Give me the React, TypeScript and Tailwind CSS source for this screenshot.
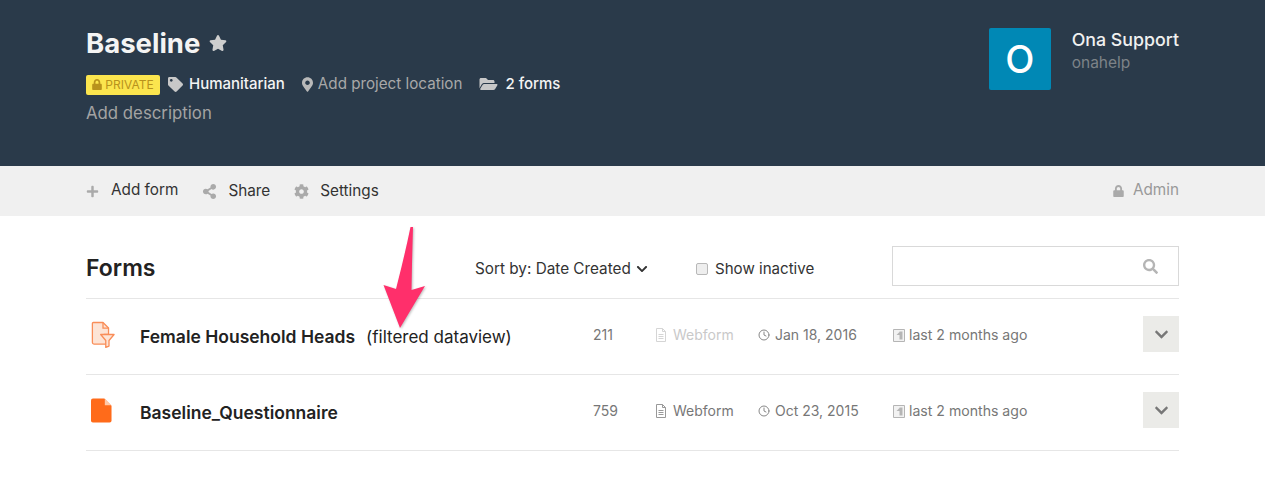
import { FaCog, FaLock, FaMapMarkerAlt, FaPlus, FaSearch, FaShareAlt, FaStar, FaTag, FaFolderOpen, FaChevronDown } from "react-icons/fa";
import { FiClock } from "react-icons/fi";

const FileLines = ({ className }: { className: string }) => (
  <svg viewBox="0 0 12 14" className={className} fill="none" stroke="currentColor" strokeWidth="1">
    <path d="M1.500 .5h6l3 3v10h-9z" />
    <path d="M7.500 .5v3h3M3.500 6.500h5M3.500 8.500h5M3.500 10.500h5" />
  </svg>
);

const SubmissionIcon = () => (
  <svg viewBox="0 0 12 13" className="w-[12px] h-[13px] text-[#b5b5b5] shrink-0">
    <path d="M.5.5h11v12H.5z" fill="#f2f2f2" stroke="currentColor" />
    <path d="M6.500 2.500h3v8h-3zM6.500 6l-3 0 3-3z" fill="currentColor" />
  </svg>
);

const FormIconFiltered = () => (
  <svg viewBox="0 0 26 28" className="w-[24px] h-[27px]">
    <path d="M2.500 1h10.500l6 6v7h-5l4.500 6v4.500H3.500a2 2 0 0 1-2-2V2a1 1 0 0 1 1-1z" fill="#fde4d6" stroke="#f98d58" strokeWidth="1.400" strokeLinejoin="round" />
    <path d="M13 1v6h6" fill="none" stroke="#f98d58" strokeWidth="1.400" />
    <path d="M10.500 14H25l-5.500 6.500v6l-3.500 1.500v-7.500z" fill="#fde4d6" stroke="#f98d58" strokeWidth="1.400" strokeLinejoin="round" />
  </svg>
);

const FormIconSolid = () => (
  <svg viewBox="0 0 22 25" className="w-[21px] h-[25px]">
    <path d="M2 0h12l7.500 7.500V23a2 2 0 0 1-2 2H2a2 2 0 0 1-2-2V2a2 2 0 0 1 2-2z" fill="#ff6b1a" />
    <path d="M14.500 .5v6.500h6.500z" fill="#ffc9a8" />
  </svg>
);

type Row = {
  name: string;
  extra?: string;
  count: number;
  date: string;
  filtered: boolean;
};

const rows: Row[] = [
  { name: "Female Household Heads", extra: "(filtered dataview)", count: 211, date: "Jan 18, 2016", filtered: true },
  { name: "Baseline_Questionnaire", count: 759, date: "Oct 23, 2015", filtered: false },
];

const FormRow = ({ row }: { row: Row }) => {
  return (
    <div className="flex items-start h-[76px] border-b border-[#e6e6e6]">
      <div className={`w-[54px] flex shrink-0 pl-[5px] ${row.filtered ? "pt-[22px]" : "pt-[23px]"}`}>
        {row.filtered ? <FormIconFiltered /> : <FormIconSolid />}
      </div>
      <div className="w-[453px] shrink-0 flex items-center text-[17.500px] leading-[24px] text-[#222] pt-[26px]">
        <span className="font-semibold">{row.name}</span>
        {row.extra && <span className="ml-[11px] text-[17px]">{row.extra}</span>}
      </div>
      <div className="w-[62px] shrink-0 text-[14px] leading-[20px] text-[#777] pt-[26px]">{row.count}</div>
      <div className={`w-[103px] shrink-0 flex items-center gap-[6px] text-[14px] leading-[20px] pt-[26px] ${row.filtered ? "text-[#c9c9c9]" : "text-[#777]"}`}>
        <FileLines className={`w-[12px] h-[14px] shrink-0 ${row.filtered ? "text-[#d5d5d5]" : "text-[#999]"}`} />
        Webform
      </div>
      <div className="w-[135px] shrink-0 flex items-center gap-[5px] text-[14px] leading-[20px] text-[#777] pt-[26px]">
        <FiClock className="w-[12px] h-[12px] shrink-0 text-[#888]" />
        {row.date}
      </div>
      <div className="flex items-center gap-[4px] text-[14.100px] leading-[20px] text-[#777] pt-[26px]">
        <SubmissionIcon />
        last 2 months ago
      </div>
      <button className="ml-auto mt-[17px] w-[36px] h-[36px] bg-[#ebebe8] flex items-center justify-center text-[#777]">
        <FaChevronDown className="w-[15px] h-[15px]" />
      </button>
    </div>
  );
};

export default function App() {
  return (
    <div className="relative h-[488px] overflow-hidden bg-white font-['Inter',sans-serif]">
      <header className="h-[166px] bg-[#2a3a4a] px-[86px] pt-[25px] flex justify-between">
        <div>
          <div className="flex items-center gap-[9px]">
            <h1 className="text-[27.500px] leading-[36px] font-bold text-[#f4f4f4]">Baseline</h1>
            <FaStar className="w-[18px] h-[18px] text-[#cfcfcf]" />
          </div>
          <div className="flex items-center mt-[12px] h-[22px] text-[15.200px]">
            <span className="flex items-center gap-[3px] mt-[1px] h-[20px] w-[74px] justify-center bg-[#fbe54e] rounded-[2px] text-[12px] text-[#b8921c]">
              <FaLock className="w-[10px] h-[11px]" />
              PRIVATE
            </span>
            <FaTag className="ml-[8px] w-[15px] h-[15px] text-[#c8c8c8]" />
            <span className="ml-[6px] font-medium text-[#f4f4f4] text-[15px]">Humanitarian</span>
            <FaMapMarkerAlt className="ml-[17px] w-[11px] h-[15px] text-[#b9b9b9]" />
            <span className="ml-[5px] text-[#a8a8a8]">Add project location</span>
            <FaFolderOpen className="ml-[17px] w-[19px] h-[16px] text-[#c8c8c8]" />
            <span className="ml-[7px] font-medium text-[#f4f4f4] text-[15px]">2 forms</span>
          </div>
          <p className="mt-[6px] text-[16.800px] leading-[24px] text-[#a3a3a3]">Add description</p>
        </div>
        <div className="w-[190px] flex gap-[21px] pt-[3px]">
          <div className="w-[62px] h-[62px] rounded-[2px] bg-[#0088b5] flex items-center justify-center">
            <span className="text-[38px] leading-none font-medium text-white">O</span>
          </div>
          <div className="whitespace-nowrap">
            <p className="text-[17.800px] leading-[24px] font-medium text-[#f0f0f0]">Ona Support</p>
            <p className="text-[15.500px] leading-[20px] mt-[1px] text-[#7d8388]">onahelp</p>
          </div>
        </div>
      </header>

      <nav className="h-[50px] bg-[#f0f0f0] px-[86px] flex items-center text-[15.300px] text-[#333]">
        <FaPlus className="w-[13px] h-[13px] text-[#aaa]" />
        <span className="ml-[12px] -mt-[1px]">Add form</span>
        <FaShareAlt className="ml-[24px] w-[15px] h-[15px] text-[#aaa]" />
        <span className="ml-[11px]">Share</span>
        <FaCog className="ml-[24px] w-[15px] h-[15px] text-[#aaa]" />
        <span className="ml-[11px]">Settings</span>
        <FaLock className="ml-auto w-[11px] h-[12px] text-[#aaa]" />
        <span className="ml-[9px] -mt-[1px] text-[#999]">Admin</span>
      </nav>

      <main className="px-[86px]">
        <div className="flex items-center h-[83px] border-b border-[#e6e6e6] pt-[30px] pb-[12px]">
          <h2 className="w-[389px] h-[40px] text-[23px] leading-[44px] font-semibold text-[#222]">Forms</h2>
          <div className="w-[221px] h-[40px] pt-[6px] flex items-center gap-[5px] text-[15.300px] text-[#333]">
            Sort by: Date Created
            <FaChevronDown className="w-[12px] h-[12px]" />
          </div>
          <label className="h-[40px] pt-[6px] flex items-center gap-[7px] text-[15.100px] text-[#333]">
            <span className="w-[12px] h-[12px] rounded-[2px] border border-[#b8b8b8] bg-[#eee]" />
            Show inactive
          </label>
          <div className="ml-auto w-[287px] h-[40px] border border-[#d9d9d9] flex items-center justify-end pr-[20px]">
            <FaSearch className="w-[15px] h-[15px] text-[#b5b5b5]" />
          </div>
        </div>
        {rows.map((row) => (
          <FormRow key={row.name} row={row} />
        ))}
      </main>

      {/* annotation arrow on top of the screenshot */}
      <svg viewBox="0 0 60 110" className="absolute left-[380px] top-[224px] w-[60px] h-[110px] drop-shadow-[1px_1px_1px_rgba(0,0,0,0.25)]">
        <path d="M30.500 3 L33 3 L32 40 L31.500 66 L45 62 L20 104 L3.500 61 L16 65 Q25 30 30.500 3z" fill="#ff2f6b" />
      </svg>
    </div>
  );
}
